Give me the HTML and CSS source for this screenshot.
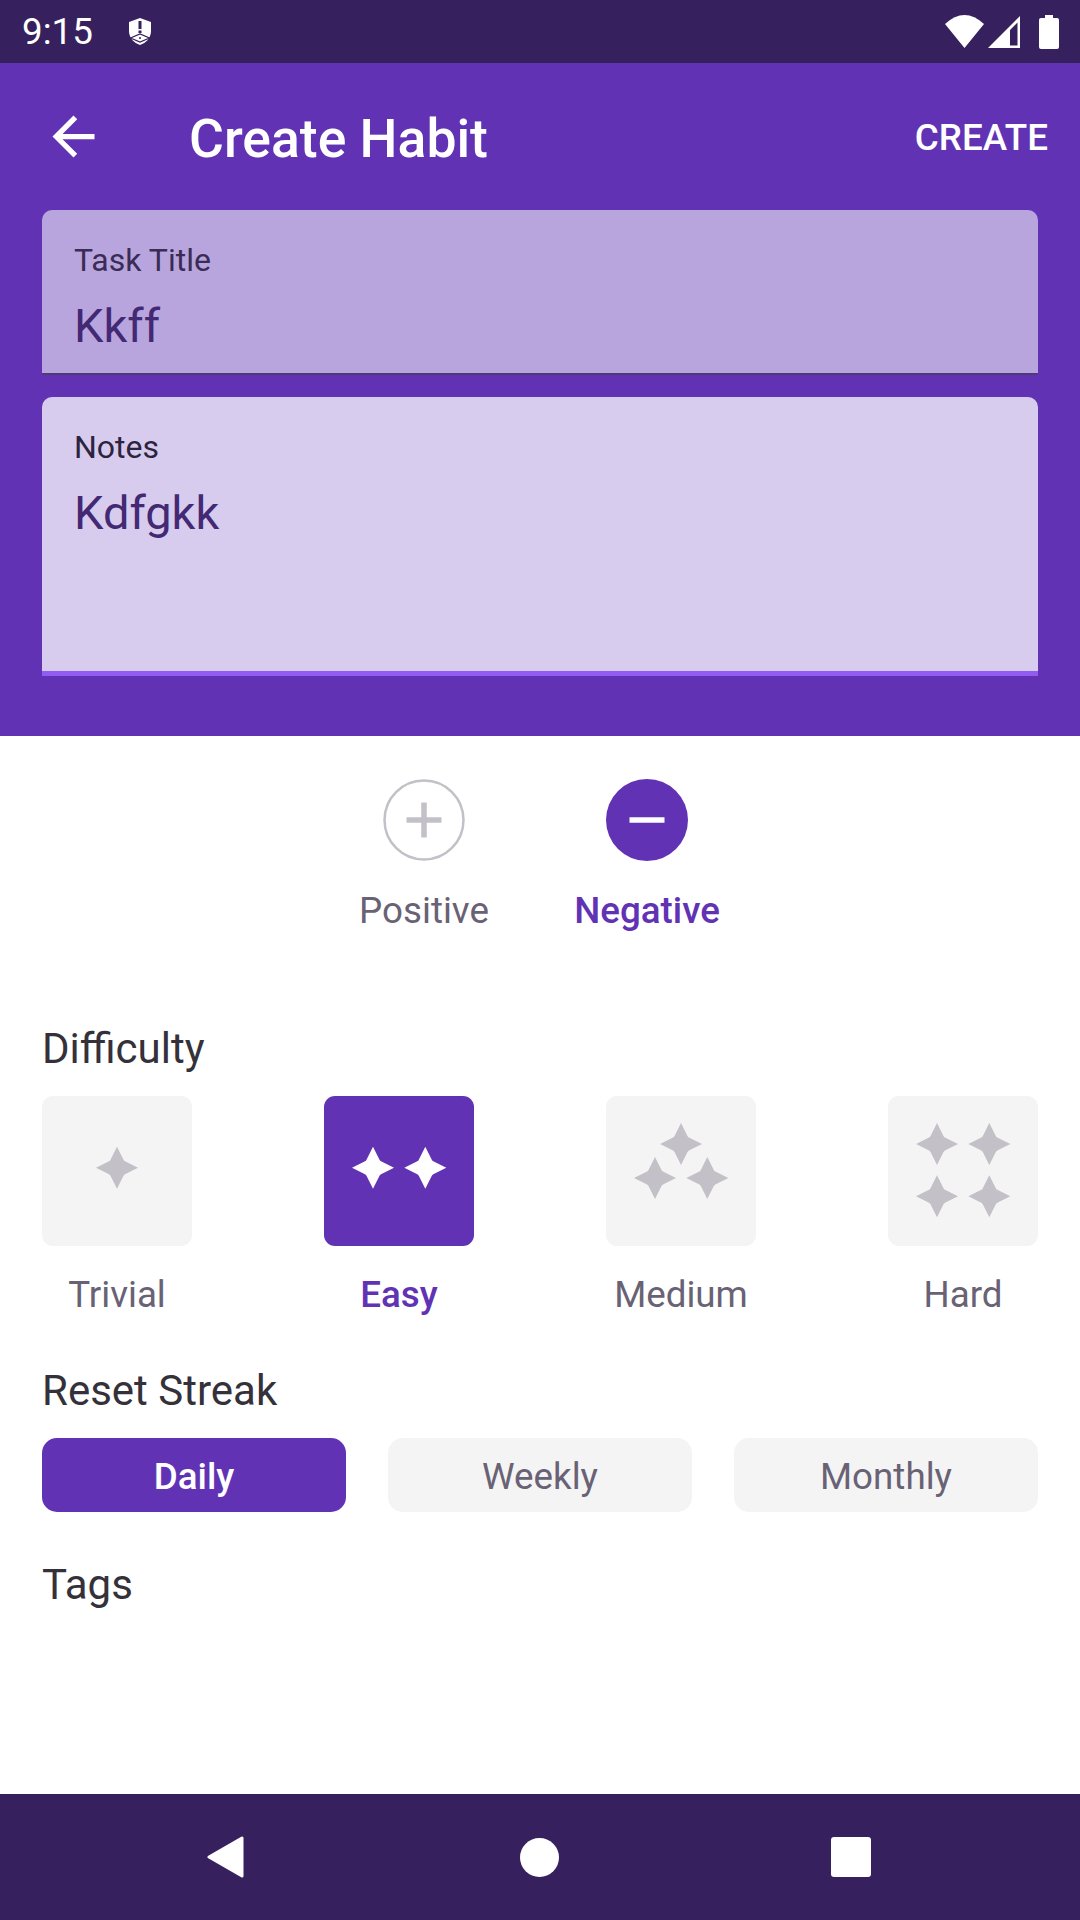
FILE: index.html
```html
<!DOCTYPE html>
<html lang="en">
<head>
    <meta charset="UTF-8">
    <title>Create Habit</title>
    <link rel="stylesheet" href="styles.css">
</head>
<body>
<svg class="defs" width="0" height="0">
    <symbol id="star" viewBox="-21 -21 42 42" overflow="visible">
        <path d="M0-21 6.5-8Q7-7 8-6.5L21 0 8 6.5Q7 7 6.5 8L0 21-6.5 8Q-7 7-8 6.5L-21 0-8-6.5Q-7-7-6.5-8Z"/>
    </symbol>
</svg>
<div class="phone">
    <div class="status-bar">
        <div class="status-left">
            <span class="clock">9:15</span>
            <svg class="shield" width="22" height="27" viewBox="0 0 22 27">
                <path d="M11 0 22 4V13C22 20 17 25 11 27 5 25 0 20 0 13V4Z" fill="#fff"/>
                <rect x="9.5" y="3" width="3" height="8" fill="#36205d"/>
                <rect x="9.5" y="12.500" width="3" height="2.500" fill="#36205d"/>
                <path d="M1.500 20 11 16 20.500 20 11 24Z" fill="none" stroke="#36205d" stroke-width="1.300"/>
                <circle cx="11" cy="20" r="1" fill="#36205d"/>
            </svg>
        </div>
        <div class="status-right">
            <svg width="39" height="33" viewBox="0 0 39 33"><path d="M0 9Q19.5-9 39 9L19.5 33Z" fill="#fff"/></svg>
            <svg class="signal" width="32" height="32" viewBox="0 0 32 32"><path fill-rule="evenodd" d="M0 32 32 0V32ZM22 14V29.5H29.5V6.500Z" fill="#fff"/></svg>
            <svg class="battery" width="20" height="34" viewBox="0 0 20 34"><path d="M6 0H14V3H18Q20 3 20 5V32Q20 34 18 34H2Q0 34 0 32V5Q0 3 2 3H6Z" fill="#fff"/></svg>
        </div>
    </div>

    <div class="header">
        <div class="toolbar">
            <svg class="back-arrow" width="63" height="63" viewBox="0 0 24 24"><path d="M20 11H7.830l5.590-5.590L12 4l-8 8 8 8 1.410-1.410L7.830 13H20v-2z" fill="#fff"/></svg>
            <span class="toolbar-title">Create Habit</span>
            <span class="toolbar-action">CREATE</span>
        </div>
        <div class="field field-title">
            <div class="field-label">Task Title</div>
            <div class="field-value">Kkff</div>
        </div>
        <div class="field field-notes">
            <div class="field-label">Notes</div>
            <div class="field-value">Kdfgkk</div>
        </div>
    </div>

    <div class="content">
        <div class="type-row">
            <div class="type-item">
                <svg width="82" height="82" viewBox="0 0 82 82">
                    <circle cx="41" cy="41" r="39.500" fill="none" stroke="#c3c0c7" stroke-width="2.500"/>
                    <path d="M23.500 41H58.500M41 23.500V58.500" stroke="#c3c0c7" stroke-width="5.500" fill="none"/>
                </svg>
                <span class="option-label">Positive</span>
            </div>
            <div class="type-item">
                <svg width="82" height="82" viewBox="0 0 82 82">
                    <circle cx="41" cy="41" r="41" fill="#6133b4"/>
                    <path d="M23.500 41H58.500" stroke="#fff" stroke-width="5.500" fill="none"/>
                </svg>
                <span class="option-label active">Negative</span>
            </div>
        </div>

        <div class="section-title title-difficulty">Difficulty</div>
        <div class="difficulty-row">
            <div class="difficulty-item">
                <div class="difficulty-box">
                    <svg width="150" height="150" viewBox="0 0 150 150">
                        <use href="#star" x="54" y="50.700" width="42" height="42"/>
                    </svg>
                </div>
                <span class="option-label">Trivial</span>
            </div>
            <div class="difficulty-item">
                <div class="difficulty-box active">
                    <svg width="150" height="150" viewBox="0 0 150 150">
                        <use href="#star" x="28" y="50.700" width="42" height="42"/>
                        <use href="#star" x="80.300" y="50.700" width="42" height="42"/>
                    </svg>
                </div>
                <span class="option-label active">Easy</span>
            </div>
            <div class="difficulty-item">
                <div class="difficulty-box">
                    <svg width="150" height="150" viewBox="0 0 150 150">
                        <use href="#star" x="54" y="27" width="42" height="42"/>
                        <use href="#star" x="28" y="61" width="42" height="42"/>
                        <use href="#star" x="80.300" y="61" width="42" height="42"/>
                    </svg>
                </div>
                <span class="option-label">Medium</span>
            </div>
            <div class="difficulty-item">
                <div class="difficulty-box">
                    <svg width="150" height="150" viewBox="0 0 150 150">
                        <use href="#star" x="28" y="27" width="42" height="42"/>
                        <use href="#star" x="80.300" y="27" width="42" height="42"/>
                        <use href="#star" x="28" y="79.300" width="42" height="42"/>
                        <use href="#star" x="80.300" y="79.300" width="42" height="42"/>
                    </svg>
                </div>
                <span class="option-label">Hard</span>
            </div>
        </div>

        <div class="section-title title-streak">Reset Streak</div>
        <div class="streak-row">
            <div class="streak-button active">Daily</div>
            <div class="streak-button">Weekly</div>
            <div class="streak-button">Monthly</div>
        </div>

        <div class="section-title title-tags">Tags</div>
    </div>

    <div class="nav-bar">
        <svg width="38" height="44" viewBox="0 0 38 44"><path d="M35 3V41L2 22Z" fill="#fff" stroke="#fff" stroke-width="3" stroke-linejoin="round"/></svg>
        <svg class="nav-home" width="39" height="39" viewBox="0 0 38 38"><circle cx="19" cy="19" r="19" fill="#fff"/></svg>
        <svg width="40" height="40" viewBox="0 0 40 40"><rect width="40" height="40" rx="3" fill="#fff"/></svg>
    </div>
</div>
</body>
</html>
```

FILE: styles.css
```css
* {
    box-sizing: border-box;
}

body {
    margin: 0;
    background-color: #fff;
    font-family: Roboto, 'Noto Sans', sans-serif;
}

.defs {
    position: absolute;
}

.phone {
    width: 1080px;
    height: 1920px;
    display: flex;
    flex-direction: column;
}

/* status bar */
.status-bar {
    height: 63px;
    background-color: #36205d;
    display: flex;
    align-items: center;
    justify-content: space-between;
    padding: 0 21px 0 22px;
    color: #fff;
    flex-shrink: 0;
}

.status-left {
    display: flex;
    align-items: center;
    gap: 36px;
}

.clock {
    font-size: 36.750px;
    line-height: 63px;
}

.status-right {
    display: flex;
    align-items: center;
}

.signal {
    margin-left: 4px;
}

.battery {
    margin-left: 19px;
}

/* purple header */
.header {
    height: 673px;
    background-color: #6133b4;
    padding: 0 42px;
    flex-shrink: 0;
}

.toolbar {
    height: 147px;
    display: flex;
    align-items: center;
    color: #fff;
    margin: 0 -10px 0 0;
}

.toolbar-title {
    font-size: 53.500px;
    font-weight: 500;
    margin-left: 84px;
    padding-top: 4px;
}

.toolbar-action {
    font-size: 36.750px;
    font-weight: 500;
    margin-left: auto;
    padding-top: 2px;
}

.field {
    border-radius: 10px 10px 0 0;
    padding: 31.500px 32px 0;
}

.field-title {
    height: 165px;
    background-color: #b9a5dd;
    border-bottom: 2px solid #4e3a74;
}

.field-notes {
    height: 279px;
    margin-top: 22px;
    background-color: #d7cced;
    border-bottom: 5px solid #925cf3;
}

.field-label {
    font-size: 32px;
    line-height: 37px;
    color: #3a2c56;
}

.field-notes .field-label {
    color: #2c2340;
}

.field-value {
    font-size: 47px;
    line-height: 56px;
    margin-top: 19px;
    color: #432874;
}

/* white part */
.content {
    flex: 1;
    padding: 0 42px;
}

.option-label {
    font-size: 36.750px;
    line-height: 44px;
    color: #686274;
    text-align: center;
}

.option-label.active {
    color: #6133b4;
    font-weight: 500;
}

.type-row {
    display: flex;
    justify-content: center;
    gap: 23px;
    padding: 43px 9px 0 0;
}

.type-item {
    width: 200px;
    display: flex;
    flex-direction: column;
    align-items: center;
    gap: 28px;
}

.section-title {
    font-size: 42px;
    line-height: 50px;
    color: #34313a;
}

.title-difficulty {
    margin-top: 91px;
}

.difficulty-row {
    display: flex;
    justify-content: space-between;
    margin-top: 22px;
}

.difficulty-item {
    width: 150px;
    display: flex;
    flex-direction: column;
    align-items: center;
    gap: 27px;
}

.difficulty-box {
    width: 150px;
    height: 150px;
    border-radius: 11px;
    background-color: #f4f4f4;
    fill: #c3c0c7;
}

.difficulty-box svg {
    display: block;
}

.difficulty-box.active {
    background-color: #6133b4;
    fill: #fff;
}

.title-streak {
    margin-top: 49px;
}

.streak-row {
    display: flex;
    gap: 42px;
    margin-top: 22px;
}

.streak-button {
    flex: 1;
    height: 74px;
    border-radius: 15px;
    background-color: #f4f4f4;
    color: #686274;
    font-size: 36.750px;
    line-height: 78px;
    text-align: center;
}

.streak-button.active {
    background-color: #6133b4;
    color: #fff;
    font-weight: 500;
}

.title-tags {
    margin-top: 48px;
}

/* navigation bar */
.nav-bar {
    height: 126px;
    background-color: #36205d;
    display: flex;
    align-items: center;
    justify-content: space-between;
    padding: 0 209px 0 207px;
    flex-shrink: 0;
}

.nav-home {
    margin-left: 3px;
}
```
